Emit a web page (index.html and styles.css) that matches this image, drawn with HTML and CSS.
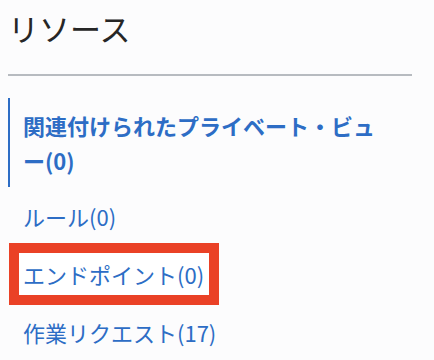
FILE: index.html
```html
<!DOCTYPE html>
<html lang="ja">
<head>
<meta charset="utf-8">
<link rel="stylesheet" href="styles.css">
</head>
<body>
<div class="panel">
  <h2 class="title">リソース</h2>
  <ul class="nav">
    <li class="item active"><a href="#">関連付けられたプライベート・ビュー(0)</a></li>
    <li class="item"><a href="#">ルール(0)</a></li>
    <li class="item marked"><a href="#">エンドポイント(0)</a></li>
    <li class="item"><a href="#">作業リクエスト(17)</a></li>
  </ul>
</div>
</body>
</html>
```
FILE: styles.css
```css
html, body {
  margin: 0;
  padding: 0;
  background: #fcfcfd;
}
body {
  font-family: "Noto Sans CJK JP", "Noto Sans", sans-serif;
  width: 434px;
  height: 360px;
  overflow: hidden;
}
.panel {
  padding: 0 22px 0 8px;
}
.title {
  margin: 0;
  box-sizing: border-box;
  height: 76px;
  padding-top: 7px;
  font-size: 31px;
  font-weight: 400;
  line-height: 42px;
  color: #262626;
  border-bottom: 2px solid #b7bbc0;
}
.nav {
  list-style: none;
  margin: 22px 0 0 0;
  padding: 0;
}
.item {
  font-size: 22px;
  line-height: 35px;
  padding: 11.5px 0 11.5px 15px;
}
.item a {
  color: #2d6dc5;
  text-decoration: none;
}
.item.active {
  border-left: 2px solid #2d6dc5;
  padding: 9.5px 20px 9.5px 13px;
  font-weight: 700;
}
.item.marked {
  position: relative;
  isolation: isolate;
}
.item.marked::before {
  content: "";
  position: absolute;
  left: 1px;
  top: -2px;
  width: 210px;
  height: 62px;
  box-sizing: border-box;
  border: 10px solid #ea4126;
  background: #ffffff;
  z-index: -1;
}
```
